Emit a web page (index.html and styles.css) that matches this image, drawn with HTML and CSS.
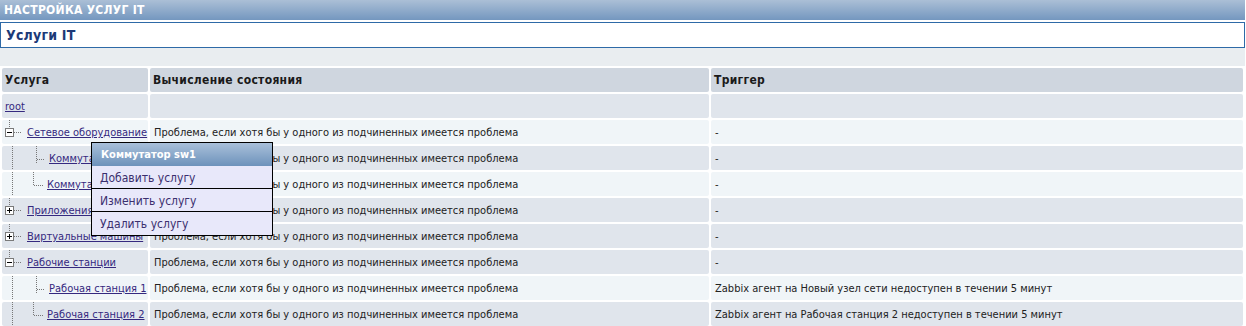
FILE: index.html
```html
<!DOCTYPE html>
<html lang="ru">
<head>
    <meta charset="UTF-8">
    <title>Услуги IT</title>
    <link rel="stylesheet" href="styles.css">
</head>
<body>
    <div class="page">
        <div class="bar">НАСТРОЙКА УСЛУГ IT</div>
        <div class="title">Услуги IT</div>
        <div class="band"></div>
        <table class="services">
            <colgroup>
                <col class="col-name">
                <col class="col-calc">
                <col>
            </colgroup>
            <tr class="head">
                <td>Услуга</td>
                <td>Вычисление состояния</td>
                <td>Триггер</td>
            </tr>
            <tr class="dark">
                <td class="tree"><div class="tree-row"><a class="root" href="#">root</a></div></td>
                <td></td>
                <td></td>
            </tr>
            <tr class="light">
                <td class="tree"><div class="tree-row">
                    <svg width="22" height="24"><line x1="7.5" y1="0" x2="7.5" y2="9" class="dot"/><rect x="3.5" y="8.5" width="8" height="8" class="box"/><line x1="5" y1="12.5" x2="10" y2="12.5" class="sign"/><line x1="12" y1="12.5" x2="20" y2="12.5" class="dot"/></svg><a href="#">Сетевое оборудование</a>
                </div></td>
                <td>Проблема, если хотя бы у одного из подчиненных имеется проблема</td>
                <td>-</td>
            </tr>
            <tr class="dark">
                <td class="tree"><div class="tree-row">
                    <svg width="44" height="24"><line x1="10.5" y1="0" x2="10.5" y2="24" class="dot"/><line x1="34.5" y1="0" x2="34.5" y2="17" class="dot"/><line x1="35" y1="13.5" x2="43" y2="13.5" class="dot"/></svg><a href="#">Коммутатор sw1</a>
                </div></td>
                <td>Проблема, если хотя бы у одного из подчиненных имеется проблема</td>
                <td>-</td>
            </tr>
            <tr class="light">
                <td class="tree"><div class="tree-row">
                    <svg width="42" height="24"><line x1="10.5" y1="0" x2="10.5" y2="24" class="dot"/><line x1="31.5" y1="0" x2="31.5" y2="14" class="dot"/><line x1="32" y1="13.5" x2="41" y2="13.5" class="dot"/></svg><a href="#">Коммутатор sw2</a>
                </div></td>
                <td>Проблема, если хотя бы у одного из подчиненных имеется проблема</td>
                <td>-</td>
            </tr>
            <tr class="dark">
                <td class="tree"><div class="tree-row">
                    <svg width="22" height="24"><line x1="7.5" y1="0" x2="7.5" y2="9" class="dot"/><rect x="3.5" y="8.5" width="8" height="8" class="box"/><line x1="5" y1="12.5" x2="10" y2="12.5" class="sign"/><line x1="7.5" y1="10" x2="7.5" y2="15" class="sign"/><line x1="12" y1="12.5" x2="20" y2="12.5" class="dot"/></svg><a href="#">Приложения</a>
                </div></td>
                <td>Проблема, если хотя бы у одного из подчиненных имеется проблема</td>
                <td>-</td>
            </tr>
            <tr class="dark">
                <td class="tree"><div class="tree-row">
                    <svg width="22" height="24"><line x1="7.5" y1="0" x2="7.5" y2="9" class="dot"/><rect x="3.5" y="8.5" width="8" height="8" class="box"/><line x1="5" y1="12.5" x2="10" y2="12.5" class="sign"/><line x1="7.5" y1="10" x2="7.5" y2="15" class="sign"/><line x1="12" y1="12.5" x2="20" y2="12.5" class="dot"/></svg><a href="#">Виртуальные машины</a>
                </div></td>
                <td>Проблема, если хотя бы у одного из подчиненных имеется проблема</td>
                <td>-</td>
            </tr>
            <tr class="dark">
                <td class="tree"><div class="tree-row">
                    <svg width="22" height="24"><line x1="7.5" y1="0" x2="7.5" y2="9" class="dot"/><rect x="3.5" y="8.5" width="8" height="8" class="box"/><line x1="5" y1="12.5" x2="10" y2="12.5" class="sign"/><line x1="12" y1="12.5" x2="20" y2="12.5" class="dot"/></svg><a href="#">Рабочие станции</a>
                </div></td>
                <td>Проблема, если хотя бы у одного из подчиненных имеется проблема</td>
                <td>-</td>
            </tr>
            <tr class="light">
                <td class="tree"><div class="tree-row">
                    <svg width="44" height="24"><line x1="10.5" y1="0" x2="10.5" y2="24" class="dot"/><line x1="34.5" y1="0" x2="34.5" y2="17" class="dot"/><line x1="35" y1="13.5" x2="43" y2="13.5" class="dot"/></svg><a href="#">Рабочая станция 1</a>
                </div></td>
                <td>Проблема, если хотя бы у одного из подчиненных имеется проблема</td>
                <td>Zabbix агент на Новый узел сети недоступен в течении 5 минут</td>
            </tr>
            <tr class="dark">
                <td class="tree"><div class="tree-row">
                    <svg width="42" height="24"><line x1="10.5" y1="0" x2="10.5" y2="24" class="dot"/><line x1="31.5" y1="0" x2="31.5" y2="14" class="dot"/><line x1="32" y1="13.5" x2="41" y2="13.5" class="dot"/></svg><a href="#">Рабочая станция 2</a>
                </div></td>
                <td>Проблема, если хотя бы у одного из подчиненных имеется проблема</td>
                <td>Zabbix агент на Рабочая станция 2 недоступен в течении 5 минут</td>
            </tr>
        </table>

        <div class="menu">
            <div class="menu-title">Коммутатор sw1</div>
            <div class="menu-item">Добавить услугу</div>
            <div class="menu-item">Изменить услугу</div>
            <div class="menu-item">Удалить услугу</div>
        </div>
    </div>
</body>
</html>
```

FILE: styles.css
```css
body {
    margin: 0;
    background: #fff;
    font-family: "DejaVu Sans Condensed", "DejaVu Sans", sans-serif;
    font-size: 11px;
    color: #222;
}
.page {
    position: relative;
    width: 1245px;
}
.bar {
    height: 20px;
    line-height: 20px;
    padding-left: 4px;
    background: linear-gradient(#abbfd6, #7497bf);
    color: #fff;
    font-weight: bold;
    font-size: 12px;
    letter-spacing: 0.3px;
}
.title {
    margin-top: 2px;
    height: 24px;
    line-height: 24px;
    border: 1px solid #2e6aa7;
    padding-left: 5px;
    background: #fff;
    color: #1c3a78;
    font-weight: bold;
    font-size: 14px;
    letter-spacing: 0.2px;
}
.band {
    height: 18px;
    background: #e9edf0;
}
.services {
    width: 100%;
    table-layout: fixed;
    border-collapse: separate;
    border-spacing: 2px;
    background: #fff;
}
.services .col-name {
    width: 146px;
}
.services .col-calc {
    width: 559px;
}
.services td {
    height: 24px;
    padding: 0 4px;
    border-radius: 2px;
    white-space: nowrap;
    overflow: visible;
    vertical-align: middle;
}
.head td {
    background: #cfd6df;
    font-weight: bold;
    font-size: 12px;
    letter-spacing: 0.3px;
    color: #1a1a1a;
    padding-left: 3px;
}
.dark td {
    background: #e0e5ec;
}
.light td {
    background: #f0f5f8;
}
.services td.tree {
    padding: 0;
}
.tree-row {
    display: flex;
    align-items: center;
    height: 24px;
}
.tree-row svg {
    flex: none;
    margin-right: 3px;
}
.tree-row a {
    padding-top: 1px;
}
.tree-row .root {
    margin-left: 3px;
}
.services a {
    color: #35297f;
    text-decoration: underline;
}
.dot {
    stroke: #777;
    stroke-width: 1;
    stroke-dasharray: 1 1;
}
.box {
    fill: #fff;
    stroke: #7a7a7a;
    stroke-width: 1;
}
.sign {
    stroke: #000;
    stroke-width: 1;
}
.menu {
    position: absolute;
    left: 91px;
    top: 142px;
    width: 180px;
    border: 1px solid #000;
    background: #e8e8fa;
}
.menu-title {
    height: 23px;
    line-height: 23px;
    padding-left: 9px;
    background: linear-gradient(#a9c0da, #6d92bb);
    color: #fff;
    font-weight: bold;
    font-size: 11px;
}
.menu-item {
    height: 20px;
    line-height: 20px;
    padding: 2px 0 0 8px;
    color: #3a2f6e;
    font-size: 12px;
    border-top: 1px solid #000;
}
.menu-title + .menu-item {
    border-top: none;
}
.menu-item:last-child {
    height: 21px;
}
```
